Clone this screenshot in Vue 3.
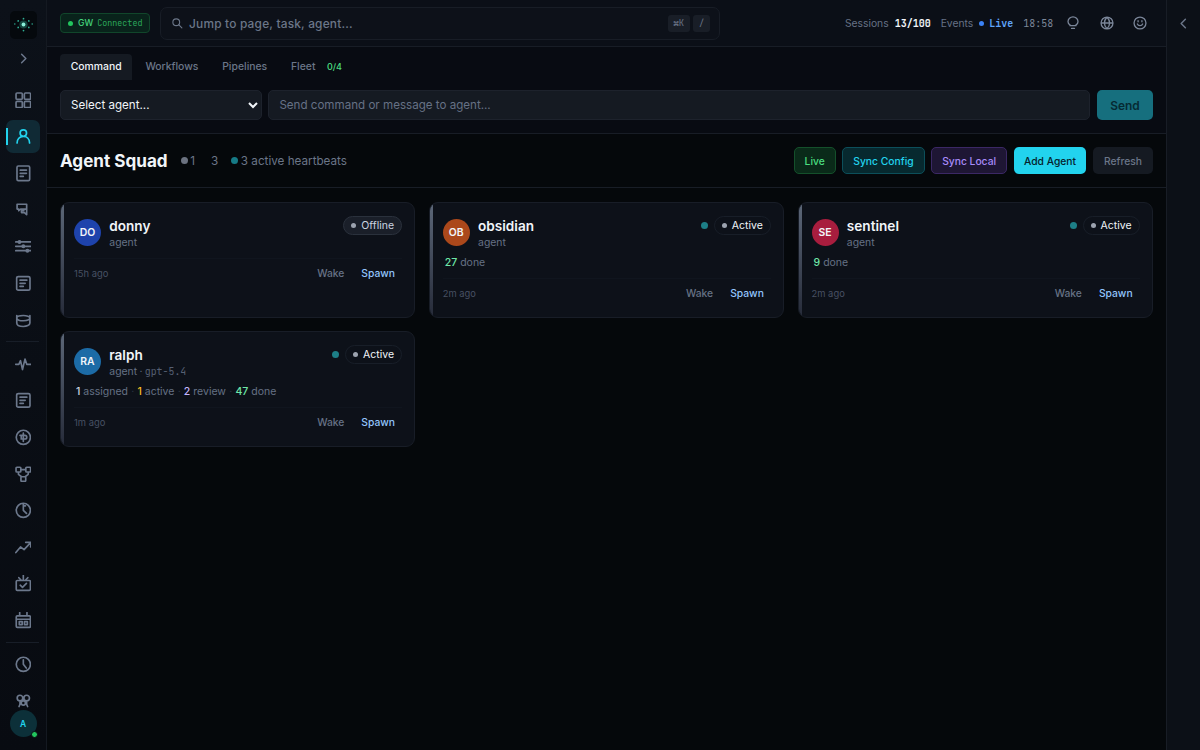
<template>
  <div class="app">
    <aside class="sidebar">
      <div class="logo">
        <svg viewBox="0 0 28 28" width="27" height="27">
          <circle cx="14" cy="14" r="4.2" fill="#34d3b0" opacity="0.3" />
          <circle cx="14" cy="14" r="2" fill="#8af0d8" />
          <g fill="#2fae93">
            <circle v-for="(dot, i) in logoDots" :key="i" :cx="dot[0]" :cy="dot[1]" :r="dot[2]" />
          </g>
        </svg>
      </div>
      <button class="expand">
        <svg class="icon" viewBox="0 0 16 16"><path d="M6 3.5l4.5 4.5L6 12.5" /></svg>
      </button>
      <nav class="nav">
        <template v-for="(group, g) in navGroups" :key="g">
          <div v-if="g > 0" class="divider"></div>
          <button
            v-for="item in group"
            :key="item.name"
            class="nav-item"
            :class="{ active: item.name === activeNav }"
            @click="activeNav = item.name"
          >
            <svg class="icon" viewBox="0 0 16 16">
              <path :d="item.path" />
              <path v-if="item.fill" class="solid" :d="item.fill" />
            </svg>
          </button>
        </template>
      </nav>
      <div class="user">A<span class="user-status"></span></div>
    </aside>

    <div class="main">
      <header class="topbar">
        <div class="gateway">
          <span class="gateway-dot"></span>
          <span class="gateway-name">GW</span>
          <span class="gateway-state">Connected</span>
        </div>
        <div class="search">
          <svg class="search-icon" viewBox="0 0 16 16">
            <circle cx="7" cy="7" r="4.5" />
            <path d="M10.5 10.5l4 4" />
          </svg>
          <span class="search-text">Jump to page, task, agent...</span>
          <kbd>⌘K</kbd>
          <kbd>/</kbd>
        </div>
        <div class="stats">
          <span class="label">Sessions</span>
          <span class="sessions">13/100</span>
          <span class="label events">Events</span>
          <span class="live-dot"></span>
          <span class="live">Live</span>
          <span class="clock">18:58</span>
          <svg class="icon top-icon" viewBox="0 0 16 16">
            <path d="M4.6 11V10.2C3.1 9.3 2.3 8.2 2.3 6.5a5.7 5.5 0 0 1 11.4 0c0 1.7-.8 2.8-2.3 3.7V11zM6.3 14.2h3.4" />
          </svg>
          <svg class="icon top-icon" viewBox="0 0 16 16">
            <path d="M8 1.2a6.8 6.8 0 1 0 0 13.6a6.8 6.8 0 1 0 0-13.6zM1.5 8h13M8 1.5c-4 4-4 9 0 13M8 1.5c4 4 4 9 0 13" />
          </svg>
          <svg class="icon top-icon" viewBox="0 0 16 16">
            <path d="M8 1.2a6.8 6.8 0 1 0 0 13.6a6.8 6.8 0 1 0 0-13.6zM5 9.2c1 2.4 5 2.4 6 0M5.8 5.4v1.2M10.2 5.4v1.2" />
          </svg>
        </div>
      </header>

      <section class="command">
        <div class="tabs">
          <button
            v-for="tab in tabs"
            :key="tab.name"
            class="tab"
            :class="{ active: tab.name === activeTab }"
            @click="activeTab = tab.name"
          >
            {{ tab.name }}<span v-if="tab.badge" class="badge">{{ tab.badge }}</span>
          </button>
        </div>
        <div class="command-row">
          <select v-model="selectedAgent" class="select">
            <option value="">Select agent...</option>
            <option v-for="agent in agents" :key="agent.name" :value="agent.name">{{ agent.name }}</option>
          </select>
          <input v-model="message" class="message" placeholder="Send command or message to agent..." />
          <button class="send">Send</button>
        </div>
      </section>

      <section class="squad-header">
        <h1>Agent Squad</h1>
        <div class="counts">
          <span class="count"><i class="dot grey"></i>1</span>
          <span class="count active-count">3</span>
          <span class="count"><i class="dot teal"></i>3 active heartbeats</span>
        </div>
        <div class="actions">
          <button class="btn green">Live</button>
          <button class="btn cyan">Sync Config</button>
          <button class="btn purple">Sync Local</button>
          <button class="btn primary">Add Agent</button>
          <button class="btn muted">Refresh</button>
        </div>
      </section>

      <section class="grid">
        <article v-for="agent in agents" :key="agent.name" class="card">
          <div class="card-head">
            <div class="avatar" :class="agent.color">{{ agent.initials }}</div>
            <div class="identity">
              <h3>{{ agent.name }}</h3>
              <p>agent<template v-if="agent.model"> · <span class="model">{{ agent.model }}</span></template></p>
            </div>
            <span v-if="agent.status === 'Active'" class="heartbeat"></span>
            <span class="status" :class="{ offline: agent.status === 'Offline' }">
              <i></i>{{ agent.status }}
            </span>
          </div>
          <div v-if="agent.tasks.length" class="tasks">
            <template v-for="(task, i) in agent.tasks" :key="task.label">
              <span v-if="i > 0" class="sep">·</span>
              <span><b :class="task.label">{{ task.count }}</b> {{ task.label }}</span>
            </template>
          </div>
          <div class="card-foot">
            <span class="seen">{{ agent.seen }}</span>
            <button class="wake">Wake</button>
            <button class="spawn">Spawn</button>
          </div>
        </article>
      </section>
    </div>

    <aside class="rail">
      <svg class="icon" viewBox="0 0 16 16"><path d="M10 3.5L5.5 8l4.5 4.5" /></svg>
    </aside>
  </div>
</template>

<script setup>
import { ref } from 'vue'

const activeNav = ref('agents')
const activeTab = ref('Command')
const selectedAgent = ref('')
const message = ref('')

const logoDots = [
  [14, 8, 0.9],
  [14, 20.3, 0.9],
  [8.5, 10.3, 0.9],
  [19.5, 10.3, 0.9],
  [8.5, 17, 0.9],
  [19.5, 17, 0.9],
  [5, 13.5, 0.8],
  [23, 13.5, 0.8]
]

const listPath = 'M3.2 1.5h9.6q1.6 0 1.6 1.4v10.2q0 1.4-1.6 1.4H3.2q-1.6 0-1.6-1.4V2.9q0-1.4 1.6-1.4zM4.8 5h6.6M4.8 8h5M4.8 11h3.2'

const navGroups = [
  [
    {
      name: 'overview',
      path: 'M2 1h4q1 0 1 1v4q0 1-1 1H2Q1 7 1 6V2q0-1 1-1zM10 1h4q1 0 1 1v4q0 1-1 1h-4q-1 0-1-1V2q0-1 1-1zM2 9h4q1 0 1 1v4q0 1-1 1H2q-1 0-1-1v-4q0-1 1-1zM10 9h4q1 0 1 1v4q0 1-1 1h-4q-1 0-1-1v-4q0-1 1-1z'
    },
    {
      name: 'agents',
      path: 'M8 1.8a3.1 3.1 0 1 0 0 6.2a3.1 3.1 0 1 0 0-6.2zM2 14.3c0-3.5 2.4-6.2 6-6.2s6 2.7 6 6.2'
    },
    {
      name: 'tasks',
      path: 'M3.2 1h9.6q1.3 0 1.3 1.3v11.4q0 1.3-1.3 1.3H3.2q-1.3 0-1.3-1.3V2.3Q1.9 1 3.2 1zM5 5h6M5 8h6M5 11h3'
    },
    {
      name: 'chat',
      path: 'M2 2.2h9.2v4.6H5.4L3.6 8.4V6.8H2zM11.2 6.8v5.4L9 10.2H6.2V8.4h2.4'
    },
    {
      name: 'channels',
      path: 'M.7 3.8h14.6M.7 8h14.6M.7 12.2h14.6',
      fill: 'M4.3 1.9a1.9 1.9 0 1 0 0 3.8a1.9 1.9 0 1 0 0-3.8zM8 6.1a1.9 1.9 0 1 0 0 3.8a1.9 1.9 0 1 0 0-3.8zM11.9 10.3a1.9 1.9 0 1 0 0 3.8a1.9 1.9 0 1 0 0-3.8z'
    },
    { name: 'skills', path: listPath },
    {
      name: 'memory',
      path: 'M1.7 3.4v7.2c0 4.4 12.6 4.4 12.6 0V3.4M1.7 5.8c0-3.2 12.6-3.2 12.6 0s-12.6 3.8-12.6 0'
    }
  ],
  [
    { name: 'activity', path: 'M.7 8h3l1.6-3.5L7.2 13l2.4-10 1.7 5h4' },
    { name: 'logs', path: listPath },
    {
      name: 'costs',
      path: 'M8 1.2a6.8 6.8 0 1 0 0 13.6a6.8 6.8 0 1 0 0-13.6zM8 4v8M4.8 6.2h4.7q1.8 0 1.8 1.7t-1.8 1.7H5.8M6 6.2v3.4'
    },
    {
      name: 'nodes',
      path: 'M1.8 1.2h3q.8 0 .8.8v3q0 .8-.8.8h-3Q1 5.8 1 5V2q0-.8.8-.8zM11.2 1.2h3q.8 0 .8.8v3q0 .8-.8.8h-3q-.8 0-.8-.8V2q0-.8.8-.8zM6.5 10.3h3q.8 0 .8.8v2.9q0 .8-.8.8h-3q-.8 0-.8-.8v-2.9q0-.8.8-.8zM5.6 3.5h4.8M3.3 5.8V8l3 2.3M12.7 5.8V8l-3 2.3'
    },
    {
      name: 'usage',
      path: 'M8 1.2a6.8 6.8 0 1 0 0 13.6a6.8 6.8 0 1 0 0-13.6zM8 1.2V8l3 3M8 3.8h2'
    },
    { name: 'trends', path: 'M.8 13l4.5-5.4 3.4 2.6L15 3.5M10.3 3.2H15V7.6' },
    {
      name: 'reviews',
      path: 'M2.2 5.3h11.6q1 0 1 1v7.4q0 1-1 1H2.2q-1 0-1-1V6.3q0-1 1-1zM5 9.8l2.2 2.1L11 8M8 5V.4M5.8 4.8L3.7 2.6M10.2 4.8l2.1-2.2'
    },
    {
      name: 'schedule',
      path: 'M2.2 3.8h11.6q1 0 1 1v9q0 1-1 1H2.2q-1 0-1-1v-9q0-1 1-1zM1.2 7h13.6M4.5.5v3.3M11.5.5v3.3M4.1 9.2h2.8v3H4.1zM9.1 9.2h2.8v3H9.1z'
    }
  ],
  [
    {
      name: 'history',
      path: 'M8 1.2a6.8 6.8 0 1 0 0 13.6a6.8 6.8 0 1 0 0-13.6zM8 3.8V8l2.8 3.6'
    },
    {
      name: 'integrations',
      path: 'M4.8 2.2a2.7 2.7 0 1 0 0 5.4a2.7 2.7 0 1 0 0-5.4zM11.2 2.2a2.7 2.7 0 1 0 0 5.4a2.7 2.7 0 1 0 0-5.4zM8 7.6a2 2 0 1 0 0 4a2 2 0 1 0 0-4zM4.8 7.8v3.2L3.9 13M11.2 7.8v3.2l.9 2'
    }
  ]
]

const tabs = [
  { name: 'Command' },
  { name: 'Workflows' },
  { name: 'Pipelines' },
  { name: 'Fleet', badge: '0/4' }
]

const agents = [
  { name: 'donny', initials: 'DO', color: 'blue', status: 'Offline', seen: '15h ago', tasks: [] },
  {
    name: 'obsidian',
    initials: 'OB',
    color: 'orange',
    status: 'Active',
    seen: '2m ago',
    tasks: [{ count: 27, label: 'done' }]
  },
  {
    name: 'sentinel',
    initials: 'SE',
    color: 'red',
    status: 'Active',
    seen: '2m ago',
    tasks: [{ count: 9, label: 'done' }]
  },
  {
    name: 'ralph',
    initials: 'RA',
    color: 'sky',
    status: 'Active',
    model: 'gpt-5.4',
    seen: '1m ago',
    tasks: [
      { count: 1, label: 'assigned' },
      { count: 1, label: 'active' },
      { count: 2, label: 'review' },
      { count: 47, label: 'done' }
    ]
  }
]
</script>

<style>
body {
  background: #05080b;
}
</style>

<style scoped>
* {
  box-sizing: border-box;
}

.app {
  display: flex;
  height: 750px;
  overflow: hidden;
  background: #05080b;
  color: #f1f5f9;
  font-family: Inter, sans-serif;
  font-size: 11.67px;
}

button,
input,
select {
  font-family: inherit;
  border: none;
  padding: 0;
  margin: 0;
}

button {
  background: none;
  color: inherit;
}

h1,
h3,
p {
  margin: 0;
}

.icon {
  width: 16.67px;
  height: 16.67px;
  flex: none;
  fill: none;
  stroke: currentColor;
  stroke-width: 1.6;
  stroke-linecap: round;
  stroke-linejoin: round;
}

.solid {
  fill: currentColor;
  stroke: none;
}

/* sidebar */
.sidebar {
  width: 47px;
  flex: none;
  display: flex;
  flex-direction: column;
  align-items: center;
  background: linear-gradient(#0c1119, #080b11);
  border-right: 1px solid #141921;
  color: #6c788c;
}

.logo {
  width: 27px;
  height: 28px;
  margin-top: 11px;
  border-radius: 5px;
  background: #05090d;
}

.logo svg {
  display: block;
}

.expand {
  height: 27px;
  margin-top: 6px;
  display: flex;
  align-items: center;
}

.expand .icon {
  width: 15px;
  height: 15px;
}

.nav {
  height: 632px;
  margin-top: 11.3px;
  overflow: hidden;
  display: flex;
  flex-direction: column;
  align-items: center;
  gap: 3.33px;
}

.nav-item {
  width: 33.33px;
  height: 33.33px;
  flex: none;
  display: flex;
  align-items: center;
  justify-content: center;
  border-radius: 7px;
  position: relative;
}

.nav-item.active {
  background: #102a35;
  color: #22d3ee;
}

.nav-item.active::before {
  content: '';
  position: absolute;
  left: 0;
  top: 8px;
  width: 1.6px;
  height: 17px;
  background: #22d3ee;
}

.divider {
  width: 33px;
  height: 1px;
  flex: none;
  margin: 1.5px 0;
  background: #181e28;
}

.user {
  width: 27px;
  height: 27px;
  flex: none;
  margin-top: -5px;
  display: flex;
  align-items: center;
  justify-content: center;
  border-radius: 50%;
  background: #0c3039;
  color: #22d3ee;
  font-size: 8.5px;
  font-weight: 600;
  position: relative;
}

.user-status {
  position: absolute;
  right: -1px;
  bottom: -1px;
  width: 7px;
  height: 7px;
  border-radius: 50%;
  border: 1px solid #080b11;
  background: #22c55e;
}

/* top bar */
.main {
  flex: 1;
  min-width: 0;
}

.topbar {
  height: 47px;
  display: flex;
  align-items: center;
  padding: 0 18px 0 13px;
  background: #0b0f17;
  border-bottom: 1px solid #181d26;
}

.gateway {
  width: 90px;
  height: 20px;
  margin-right: 10px;
  display: flex;
  align-items: center;
  padding-left: 7px;
  border: 1px solid #11462b;
  border-radius: 4px;
  background: #09231b;
  color: #45d47c;
  font-size: 8.7px;
}

.gateway-dot {
  width: 5px;
  height: 5px;
  margin-right: 5px;
  border-radius: 50%;
  background: #22c55e;
}

.gateway-name {
  margin-right: 4px;
  font-weight: 500;
}

.gateway-state,
.sessions,
.live,
.clock,
.model,
kbd {
  font-family: 'JetBrains Mono', 'DejaVu Sans Mono', monospace;
}

.gateway-state {
  font-size: 8.4px;
  color: #2ba65a;
}

.search {
  width: 560px;
  height: 33px;
  display: flex;
  align-items: center;
  padding: 0 9px 0 10px;
  border: 1px solid #181d26;
  border-radius: 7px;
  background: #0d1119;
  color: #6b7688;
}

.search-icon {
  width: 12px;
  height: 12px;
  margin-right: 6px;
  fill: none;
  stroke: currentColor;
  stroke-width: 1.5;
  stroke-linecap: round;
}

.search-text {
  flex: 1;
  font-size: 11.9px;
  font-weight: 500;
  letter-spacing: 0.2px;
}

kbd {
  height: 17px;
  margin-left: 3.5px;
  padding: 0 5.8px;
  display: flex;
  align-items: center;
  border-radius: 3px;
  background: #191e27;
  color: #6b7688;
  font-size: 8.7px;
}

.stats {
  flex: 1;
  display: flex;
  align-items: center;
  justify-content: flex-end;
  font-size: 10px;
}

.label {
  color: #677286;
  font-size: 10.3px;
}

.sessions {
  margin-left: 6px;
  font-weight: 700;
}

.events {
  margin-left: 10px;
}

.live-dot {
  width: 5px;
  height: 5px;
  margin: 0 5px 0 6px;
  border-radius: 50%;
  background: #3b82f6;
}

.live {
  color: #60a5fa;
  font-weight: 700;
}

.clock {
  margin: 0 13px 0 10px;
  color: #7d889a;
}

.top-icon {
  width: 14px;
  height: 14px;
  margin-right: 19.4px;
  stroke-width: 1.5;
  color: #7b8699;
}

.top-icon:last-child {
  margin-right: 1px;
}

/* command panel */
.command {
  height: 87px;
  padding: 7px 13px 0;
  background: #080b12;
  border-bottom: 1px solid #181d26;
}

.tabs {
  display: flex;
  gap: 2.4px;
}

.tab {
  height: 26px;
  padding: 0 10.7px 2px;
  display: flex;
  align-items: center;
  border-radius: 4px 4px 0 0;
  color: #6b7688;
  font-size: 10.4px;
  font-weight: 500;
}

.tab.active {
  background: #151a22;
  color: #f1f5f9;
}

.badge {
  margin-left: 11.5px;
  color: #4ade80;
  font-size: 9px;
}

.command-row {
  display: flex;
  gap: 6.4px;
  margin-top: 10px;
}

.select,
.message {
  height: 30px;
  border: 1px solid #1d222c;
  border-radius: 5px;
  background: #151a22;
  color: #f1f5f9;
  font-size: 11.6px;
}

.select {
  width: 202px;
  padding-left: 6px;
}

.message {
  flex: 1;
  padding: 0 10px;
}

.message::placeholder {
  color: #667185;
}

.send {
  width: 56.2px;
  height: 30px;
  border-radius: 5px;
  background: #166f7e;
  color: #062a33;
  font-size: 11.9px;
  font-weight: 600;
}

/* squad header */
.squad-header {
  height: 54px;
  display: flex;
  align-items: center;
  padding: 0 13px;
  border-bottom: 1px solid #181d26;
}

h1 {
  font-size: 17.1px;
  font-weight: 700;
}

.counts {
  display: flex;
  align-items: center;
  margin-left: 13px;
  color: #6b7688;
  font-size: 11.7px;
}

.count {
  display: flex;
  align-items: center;
}

.active-count {
  margin: 0 13px 0 16px;
}

.dot {
  width: 7px;
  height: 7px;
  margin-right: 2.6px;
  border-radius: 50%;
}

.dot.grey {
  background: #6b7280;
}

.dot.teal {
  background: #167a86;
}

.actions {
  display: flex;
  gap: 6.5px;
  margin-left: auto;
}

.btn {
  height: 26.67px;
  padding: 0 10px;
  border: 1px solid transparent;
  border-radius: 5px;
  font-size: 10.3px;
  font-weight: 500;
}

.btn.green {
  background: #0a2a19;
  border-color: #14502b;
  color: #4ade80;
}

.btn.cyan {
  background: #07292f;
  border-color: #0c4f5a;
  color: #22d3ee;
}

.btn.purple {
  background: #1e1634;
  border-color: #3b2865;
  color: #a78bfa;
}

.btn.primary {
  padding: 0 9.4px;
  background: #22d3ee;
  color: #06222b;
}

.btn.muted {
  background: #151a22;
  color: #6b7688;
}

/* cards */
.grid {
  display: grid;
  grid-template-columns: repeat(3, 1fr);
  gap: 13.33px;
  padding: 13.5px 13px 0;
}

.card {
  height: 116px;
  padding: 13px 12.4px 0 13px;
  border: 1px solid #181d27;
  border-radius: 9px;
  background: #0d1119;
  position: relative;
  overflow: hidden;
}

.card::before {
  content: '';
  position: absolute;
  left: 0;
  top: 0;
  bottom: 0;
  width: 3.4px;
  background: linear-gradient(#5c6778, #262b39);
}

.card-head {
  display: flex;
  align-items: flex-start;
}

.avatar {
  width: 27px;
  height: 27px;
  margin: 3px 8.3px 0 0;
  display: flex;
  align-items: center;
  justify-content: center;
  border-radius: 50%;
  font-size: 10.4px;
  font-weight: 600;
}

.avatar.blue {
  background: #1e43ac;
}

.avatar.orange {
  background: #ab481b;
}

.avatar.red {
  background: #a81d3e;
}

.avatar.sky {
  background: #1c6ba6;
}

.identity {
  flex: 1;
}

h3 {
  margin-top: 1px;
  font-size: 13.6px;
  font-weight: 600;
  line-height: 19px;
}

.identity p {
  color: #667185;
  font-size: 10.4px;
  line-height: 13px;
  word-spacing: -0.6px;
}

.model {
  color: #566074;
  font-size: 9.9px;
}

.heartbeat {
  width: 7px;
  height: 7px;
  margin: 6px 6px 0 0;
  border-radius: 50%;
  background: #1d7f87;
}

.status {
  height: 19px;
  padding: 0 7px;
  display: flex;
  align-items: center;
  border: 1px solid #181e28;
  border-radius: 10px;
  font-size: 10.5px;
}

.status.offline {
  border-color: #2a313c;
  background: #1a1f29;
  color: #cbd5e1;
}

.status i {
  width: 5px;
  height: 5px;
  margin-right: 5px;
  border-radius: 50%;
  background: #9ca3af;
}

.tasks {
  display: flex;
  margin: 7px 0 0 2px;
  color: #667185;
  font-size: 10.5px;
  line-height: 13px;
}

.tasks b {
  color: #cbd5e1;
  font-weight: 500;
}

.tasks .active {
  color: #fbbf24;
}

.tasks .review {
  color: #c4b5fd;
}

.tasks .done {
  color: #6ee7a8;
}

.sep {
  margin: 0 3.2px;
  color: #2c3442;
}

.card-foot {
  height: 30px;
  margin-top: 9px;
  padding-right: 7px;
  display: flex;
  align-items: center;
  border-top: 1px solid #10151e;
  font-size: 10px;
}

.seen {
  flex: 1;
  color: #475063;
  font-size: 9.4px;
}

.wake {
  margin-right: 17px;
  color: #667185;
  font-size: 10.3px;
  font-weight: 500;
}

.spawn {
  color: #93c5fd;
  font-size: 10.3px;
  font-weight: 500;
}

.rail {
  width: 34px;
  flex: none;
  display: flex;
  justify-content: center;
  padding-top: 16px;
  background: #0c1017;
  border-left: 1px solid #181d26;
  color: #6b7688;
}

.rail .icon {
  width: 15px;
  height: 15px;
}
</style>
